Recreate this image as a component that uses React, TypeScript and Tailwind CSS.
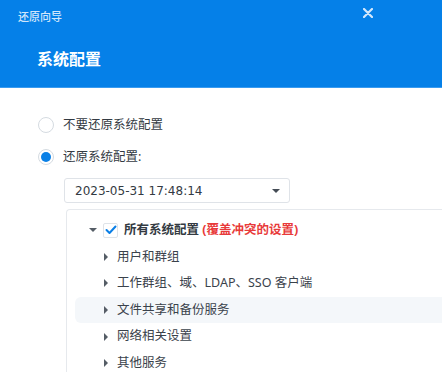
import React from 'react';

const items = ['用户和群组', '工作群组、域、LDAP、SSO 客户端', '文件共享和备份服务', '网络相关设置', '其他服务'];

function CaretRight() {
  return (
    <svg width="4" height="8" viewBox="0 0 4 8" className="shrink-0">
      <path d="M0 0 L4 4 L0 8 Z" fill="#555d66" />
    </svg>
  );
}

function CaretDown() {
  return (
    <svg width="8" height="4" viewBox="0 0 8 4" className="shrink-0">
      <path d="M0 0 L8 0 L4 4 Z" fill="#555d66" />
    </svg>
  );
}

export default function App() {
  return (
    <div
      className="w-[442px] h-[372px] overflow-hidden bg-white text-[#333a42]"
      style={{ fontFamily: '"Noto Sans", "Noto Sans CJK SC", sans-serif' }}
    >
      {/* Header */}
      <div className="h-[88px] bg-[#0580e8] border-b border-[#3a9bf0] relative">
        <div className="pl-[18px] pt-[8px] text-[11px] leading-[18px] text-[#cfe5fb] font-medium">还原向导</div>
        <div className="absolute left-[359px] top-[4px] w-[18px] h-[18px] flex items-center justify-center">
          <svg width="10" height="10" viewBox="0 0 10 10">
            <path d="M1 1 L9 9 M9 1 L1 9" stroke="#d4e8fc" strokeWidth="2.2" strokeLinecap="round" />
          </svg>
        </div>
        <div className="pl-[37px] pt-[21px] text-[16px] leading-[24px] font-bold text-white">系统配置</div>
      </div>

      {/* Body */}
      <div className="pl-[38px] pt-[28px]">
        <div className="flex items-center h-[18px] gap-[9px]">
          <span className="w-[16px] h-[16px] rounded-full border border-[#d5dbe1] bg-white shrink-0" />
          <span className="text-[12.5px]">不要还原系统配置</span>
        </div>
        <div className="flex items-center h-[18px] gap-[9px] mt-[14px]">
          <span className="w-[16px] h-[16px] rounded-full border border-[#d5dbe1] bg-white shrink-0 flex items-center justify-center">
            <span className="w-[10px] h-[10px] rounded-full bg-[#0a80e6]" />
          </span>
          <span className="text-[12.5px]">还原系统配置:</span>
        </div>

        <div className="ml-[26px] mt-[12px] w-[226px] h-[25px] rounded-[3px] border border-[#dfe3e8] flex items-center justify-between pl-[10px] pr-[9px]">
          <span className="text-[12px] text-[#333a42]" style={{ fontFamily: '"DejaVu Sans", sans-serif' }}>
            2023-05-31 17:48:14
          </span>
          <svg width="8" height="4" viewBox="0 0 8 4">
            <path d="M0 0 L8 0 L4 4 Z" fill="#444c55" />
          </svg>
        </div>

        {/* Tree */}
        <div className="ml-[28px] mt-[6px] border-l border-t border-[#e6e9ed] rounded-tl-[4px] pt-[7px] pl-[8px]">
          <div className="h-[26.6px] flex items-center pl-[14px]">
            <CaretDown />
            <span className="ml-[6px] w-[15px] h-[15px] rounded-[2px] border border-[#dfe3e8] bg-white flex items-center justify-center shrink-0">
              <svg width="12" height="10" viewBox="0 0 12 10">
                <path d="M1.5 5 L4.5 8 L10.5 1.5" stroke="#0a7fe6" strokeWidth="2" fill="none" strokeLinecap="round" strokeLinejoin="round" />
              </svg>
            </span>
            <span className="ml-[6px] text-[12.5px] font-bold text-[#333a42] whitespace-nowrap">
              所有系统配置 <span className="text-[#e83a3a]">(覆盖冲突的设置)</span>
            </span>
          </div>
          {items.map((label, i) => (
            <div
              key={label}
              className={`h-[26.6px] flex items-center pl-[29px] rounded-l-[6px] ${i === 2 ? 'bg-[#f4f7fa]' : ''}`}
            >
              <CaretRight />
              <span className="ml-[9px] text-[12.5px] text-[#3a424b] whitespace-nowrap">{label}</span>
            </div>
          ))}
        </div>
      </div>
    </div>
  );
}
